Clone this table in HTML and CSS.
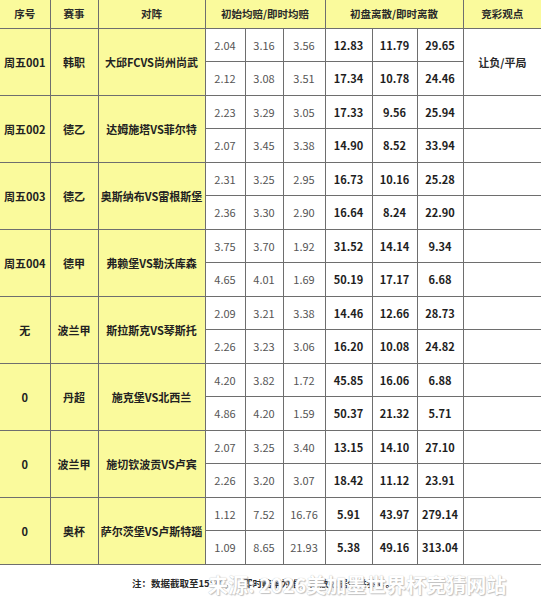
FILE: index.html
```html
<!DOCTYPE html>
<html lang="zh">
<head>
<meta charset="utf-8">
<link rel="stylesheet" href="styles.css">
</head>
<body>
<div class="page">
<table class="odds">
  <colgroup>
    <col class="c1"><col class="c2"><col class="c3">
    <col class="c4"><col class="c5"><col class="c6">
    <col class="c7"><col class="c8"><col class="c9">
    <col class="c10">
  </colgroup>
  <thead>
    <tr class="head">
      <th>序号</th><th>赛事</th><th>对阵</th>
      <th colspan="3">初始均赔/即时均赔</th>
      <th colspan="3">初盘离散/即时离散</th>
      <th>竞彩观点</th>
    </tr>
  </thead>
  <tbody>
    <tr class="r1">
      <td rowspan="2" class="y">周五001</td><td rowspan="2" class="y">韩职</td><td rowspan="2" class="y">大邱FCVS尚州尚武</td>
      <td class="n">2.04</td><td class="n">3.16</td><td class="n">3.56</td>
      <td class="b">12.83</td><td class="b">11.79</td><td class="b">29.65</td>
      <td rowspan="2" class="v">让负/平局</td>
    </tr>
    <tr class="r2">
      <td class="n">2.12</td><td class="n">3.08</td><td class="n">3.51</td>
      <td class="b">17.34</td><td class="b">10.78</td><td class="b">24.46</td>
    </tr>

    <tr class="r1">
      <td rowspan="2" class="y">周五002</td><td rowspan="2" class="y">德乙</td><td rowspan="2" class="y">达姆施塔VS菲尔特</td>
      <td class="n">2.23</td><td class="n">3.29</td><td class="n">3.05</td>
      <td class="b">17.33</td><td class="b">9.56</td><td class="b">25.94</td><td class="v"></td>
    </tr>
    <tr class="r2">
      <td class="n">2.07</td><td class="n">3.45</td><td class="n">3.38</td>
      <td class="b">14.90</td><td class="b">8.52</td><td class="b">33.94</td><td class="v"></td>
    </tr>

    <tr class="r1">
      <td rowspan="2" class="y">周五003</td><td rowspan="2" class="y">德乙</td><td rowspan="2" class="y">奥斯纳布VS雷根斯堡</td>
      <td class="n">2.31</td><td class="n">3.25</td><td class="n">2.95</td>
      <td class="b">16.73</td><td class="b">10.16</td><td class="b">25.28</td><td class="v"></td>
    </tr>
    <tr class="r2">
      <td class="n">2.36</td><td class="n">3.30</td><td class="n">2.90</td>
      <td class="b">16.64</td><td class="b">8.24</td><td class="b">22.90</td><td class="v"></td>
    </tr>

    <tr class="r1">
      <td rowspan="2" class="y">周五004</td><td rowspan="2" class="y">德甲</td><td rowspan="2" class="y">弗赖堡VS勒沃库森</td>
      <td class="n">3.75</td><td class="n">3.70</td><td class="n">1.92</td>
      <td class="b">31.52</td><td class="b">14.14</td><td class="b">9.34</td><td class="v"></td>
    </tr>
    <tr class="r2">
      <td class="n">4.65</td><td class="n">4.01</td><td class="n">1.69</td>
      <td class="b">50.19</td><td class="b">17.17</td><td class="b">6.68</td><td class="v"></td>
    </tr>

    <tr class="r1">
      <td rowspan="2" class="y">无</td><td rowspan="2" class="y">波兰甲</td><td rowspan="2" class="y">斯拉斯克VS琴斯托</td>
      <td class="n">2.09</td><td class="n">3.21</td><td class="n">3.38</td>
      <td class="b">14.46</td><td class="b">12.66</td><td class="b">28.73</td><td class="v"></td>
    </tr>
    <tr class="r2">
      <td class="n">2.26</td><td class="n">3.23</td><td class="n">3.06</td>
      <td class="b">16.20</td><td class="b">10.08</td><td class="b">24.82</td><td class="v"></td>
    </tr>

    <tr class="r1">
      <td rowspan="2" class="y">0</td><td rowspan="2" class="y">丹超</td><td rowspan="2" class="y">施克堡VS北西兰</td>
      <td class="n">4.20</td><td class="n">3.82</td><td class="n">1.72</td>
      <td class="b">45.85</td><td class="b">16.06</td><td class="b">6.88</td><td class="v"></td>
    </tr>
    <tr class="r2">
      <td class="n">4.86</td><td class="n">4.20</td><td class="n">1.59</td>
      <td class="b">50.37</td><td class="b">21.32</td><td class="b">5.71</td><td class="v"></td>
    </tr>

    <tr class="r1">
      <td rowspan="2" class="y">0</td><td rowspan="2" class="y">波兰甲</td><td rowspan="2" class="y">施切钦波贡VS卢宾</td>
      <td class="n">2.07</td><td class="n">3.25</td><td class="n">3.40</td>
      <td class="b">13.15</td><td class="b">14.10</td><td class="b">27.10</td><td class="v"></td>
    </tr>
    <tr class="r2">
      <td class="n">2.26</td><td class="n">3.20</td><td class="n">3.07</td>
      <td class="b">18.42</td><td class="b">11.12</td><td class="b">23.91</td><td class="v"></td>
    </tr>

    <tr class="r1">
      <td rowspan="2" class="y">0</td><td rowspan="2" class="y">奥杯</td><td rowspan="2" class="y">萨尔茨堡VS卢斯特瑙</td>
      <td class="n">1.12</td><td class="n">7.52</td><td class="n">16.76</td>
      <td class="b">5.91</td><td class="b">43.97</td><td class="b">279.14</td><td class="v"></td>
    </tr>
    <tr class="r2">
      <td class="n">1.09</td><td class="n">8.65</td><td class="n">21.93</td>
      <td class="b">5.38</td><td class="b">49.16</td><td class="b">313.04</td><td class="v"></td>
    </tr>
  </tbody>
</table>
<div class="note">
  <p class="note-text">注：数据截取至15:30，以即时赔率为准，离散数据仅供参考。</p>
  <span class="watermark">来源: 2026美加墨世界杯竞猜网站</span>
</div>
</div>
</body>
</html>
```

FILE: styles.css
```css
html, body {
  margin: 0;
  padding: 0;
  background: #ffffff;
}

.page {
  width: 541px;
  font-family: "Noto Sans CJK SC", "Noto Sans", sans-serif;
}

.odds {
  width: 541px;
  border-collapse: collapse;
  table-layout: fixed;
}

.c1 { width: 50px; }
.c2 { width: 48px; }
.c3 { width: 107px; }
.c4 { width: 40px; }
.c5 { width: 38px; }
.c6 { width: 42px; }
.c7 { width: 47px; }
.c8 { width: 45px; }
.c9 { width: 46px; }
.c10 { width: 78px; }

.odds th,
.odds td {
  border: 1px solid #6e6e6e;
  padding: 0;
  text-align: center;
  vertical-align: middle;
  line-height: 14px;
  white-space: nowrap;
  overflow: hidden;
}

.odds tr > :first-child { border-left: none; }
.odds tr > :last-child { border-right: none; }
.odds thead th { border-top: none; }

.head { height: 28px; }
.head th {
  background: #fafa9c;
  color: #2a2a2a;
  font-size: 10.5px;
  font-weight: 700;
}

.r1 { height: 33px; }
.r2 { height: 34px; }

.y {
  background: #fafa9c;
  color: #222222;
  font-size: 11px;
  font-weight: 700;
}

.n {
  background: #ffffff;
  color: #555555;
  font-size: 11px;
  font-weight: 400;
}

.b {
  background: #ffffff;
  color: #1e1e1e;
  font-size: 11px;
  font-weight: 700;
}

.v {
  background: #ffffff;
  color: #2a2a2a;
  font-size: 11px;
  font-weight: 700;
}

.note {
  position: relative;
  height: 36px;
  display: flex;
  align-items: center;
  padding-left: 132px;
}

.note-text {
  margin: 0;
  font-size: 9.5px;
  font-weight: 700;
  color: #2a2a2a;
  letter-spacing: 0;
}

.watermark {
  position: absolute;
  left: 208px;
  top: 5px;
  font-size: 20px;
  font-weight: 700;
  color: #ffffff;
  white-space: nowrap;
  text-shadow: 0 0 1px #b4b4b4, 1px 1px 1px #c4c4c4;
  letter-spacing: 0;
}
```
